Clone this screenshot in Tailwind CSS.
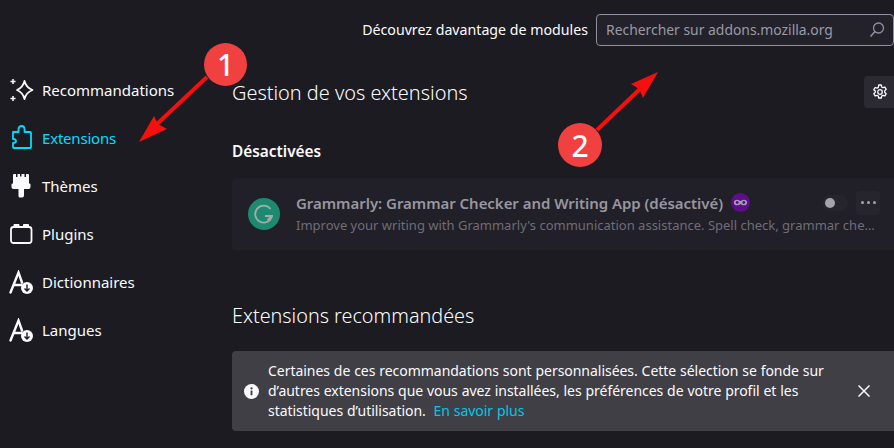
<!DOCTYPE html>
<html lang="fr">
<head>
    <meta charset="UTF-8">
    <title>Gestionnaire de modules</title>
    <script src="https://cdn.jsdelivr.net/npm/@tailwindcss/browser@4"></script>
</head>
<body class="relative w-[894px] h-[448px] overflow-hidden bg-[#1c1b22] text-[#fbfbfe] font-['Noto_Sans',sans-serif]">
    <div class="flex h-full">
        <!-- Menu de gauche -->
        <aside class="w-[232px] shrink-0 pt-[66px] pl-[10px] text-[15px]">
            <div class="flex items-center gap-2 h-12">
                <svg class="w-6 h-6" viewBox="0 0 24 24" fill="none" stroke="#fbfbfe" stroke-width="1.800" stroke-linejoin="round">
                    <path d="M14.500 3c1 4.500 3 7 8 9-5 2-7 4.500-8 9-1-4.500-3-7-7.500-9 4.500-2 6.500-4.500 7.500-9z"/>
                    <path d="M3 1v5M.5 3.500h5M3 18v5M.5 20.500h5" stroke-width="1.500"/>
                </svg>
                <span>Recommandations</span>
            </div>
            <div class="flex items-center gap-2 h-12 text-[#00ddff]">
                <svg class="w-6 h-6 overflow-visible" viewBox="0 0 24 24" fill="none" stroke="#00ddff" stroke-width="1.800" stroke-linejoin="round">
                    <path d="M3 6h5.500V3a3 3 0 0 1 6 0v3H20a1 1 0 0 1 1 1v14a1 1 0 0 1-1 1H4a1 1 0 0 1-1-1v-4c2 0 3-.8 3-2s-1-2-3-2z"/>
                </svg>
                <span class="tracking-[-0.2px]">Extensions</span>
            </div>
            <div class="flex items-center gap-2 h-12">
                <svg class="w-6 h-6" viewBox="0 0 24 24" fill="#fbfbfe">
                    <path d="M3 1a1 1 0 0 1 1-1h14a1 1 0 0 1 1 1v9H3z"/>
                    <path d="M2.500 9.500h17a1 1 0 0 1 1 1V13a2 2 0 0 1-2 2H14v6.500a2 2 0 0 1-2 2h-2a1.500 1.500 0 0 1-1.500-1.500v-7h-5a2 2 0 0 1-2-2v-2.500a1 1 0 0 1 1-1z"/>
                    <path d="M6 0h1.500v3H6zM10 0h1.500v2.500H10zM14.500 0H16v3h-1.500z" fill="#1c1b22"/>
                </svg>
                <span>Thèmes</span>
            </div>
            <div class="flex items-center gap-2 h-12">
                <svg class="w-6 h-6" viewBox="0 0 24 24" fill="none" stroke="#fbfbfe" stroke-width="1.800">
                    <rect x="1" y="5" width="20.500" height="16" rx="2.500"/>
                    <path d="M4 5V2.500h5V5M13.500 5V2.500h5V5" fill="#fbfbfe" stroke-width="1"/>
                </svg>
                <span>Plugins</span>
            </div>
            <div class="flex items-center gap-2 h-12">
                <svg class="w-[25px] h-6 -ml-px" viewBox="0 0 25 24" fill="none" stroke="#fbfbfe" stroke-width="2.400" stroke-linecap="round">
                    <path d="M1.500 22.500 9.500 2.500l3.500 10M5 15h7"/>
                    <circle cx="18" cy="18" r="6" fill="#fbfbfe" stroke="none"/>
                    <path d="M18 14.500v6M15.500 18.500l2.500 2.500 2.500-2.500" stroke="#1c1b22" stroke-width="1.400" stroke-linecap="butt"/>
                </svg>
                <span>Dictionnaires</span>
            </div>
            <div class="flex items-center gap-2 h-12">
                <svg class="w-[25px] h-6 -ml-px" viewBox="0 0 25 24" fill="none" stroke="#fbfbfe" stroke-width="2.400" stroke-linecap="round">
                    <path d="M1.500 22.500 9.500 2.500l3.500 10M5 15h7"/>
                    <circle cx="18" cy="18" r="6" fill="#fbfbfe" stroke="none"/>
                    <path d="M18 14.500v6M15.500 18.500l2.500 2.500 2.500-2.500" stroke="#1c1b22" stroke-width="1.400" stroke-linecap="butt"/>
                </svg>
                <span>Langues</span>
            </div>
        </aside>

        <!-- Contenu -->
        <main class="w-[662px] pt-[14px]">
            <div class="flex items-center justify-end gap-2 h-8">
                <span class="text-[14.2px]">Découvrez davantage de modules</span>
                <div class="flex items-center justify-between w-[298px] h-8 pl-[9px] pr-2 bg-[#23222b] border border-[#8f8f9d] rounded-[4px]">
                    <span class="text-[13.9px] text-[#9a9aa6]">Rechercher sur addons.mozilla.org</span>
                    <svg class="w-4 h-4" viewBox="0 0 16 16" fill="none" stroke="#8f8f9d" stroke-width="1.300">
                        <circle cx="9.500" cy="6" r="5"/>
                        <path d="M6 9.500 1.500 14.500" stroke-width="1.600"/>
                    </svg>
                </div>
            </div>

            <div class="flex items-center justify-between h-8 mt-[30px]">
                <h1 class="pt-[2px] text-[19.900px] font-light">Gestion de vos extensions</h1>
                <button class="flex items-center justify-center w-[30px] h-8 bg-[#2b2a33] rounded-l-[4px]">
                    <svg class="w-4 h-4 ml-px" viewBox="0 0 16 16" fill="none" stroke="#fbfbfe" stroke-width="1.300" stroke-linejoin="round">
                        <path d="M6.700 1h2.600l.4 2 1.200.7 2-.6 1.300 2.200-1.500 1.400v1.600l1.500 1.400-1.300 2.200-2-.6-1.200.7-.4 2H6.700l-.4-2-1.200-.7-2 .6-1.300-2.200 1.500-1.400V7.100L1.800 5.700l1.300-2.200 2 .6 1.200-.7z"/>
                        <circle cx="8" cy="8" r="2.300"/>
                    </svg>
                </button>
            </div>

            <h2 class="mt-[33px] h-[22px] text-[15.400px] leading-[22px] font-semibold">Désactivées</h2>

            <div class="flex items-center w-[680px] h-[72px] mt-[15px] pl-4 bg-[#211f28] rounded-[4px]">
                <svg class="w-8 h-8 shrink-0" viewBox="0 0 32 32">
                    <circle cx="16" cy="16" r="16" fill="#1c8a70"/>
                    <path d="M22.500 11a8.500 8.500 0 1 0 1.500 7h-7" fill="none" stroke="#a6aaa9" stroke-width="1.800"/>
                    <path d="M19.500 22l4.500-4" fill="none" stroke="#a6aaa9" stroke-width="1.800"/>
                </svg>
                <div class="w-[582px] ml-4">
                    <div class="flex items-center h-[22px] -mt-px">
                        <span class="text-[15px] tracking-[-0.04px] font-semibold text-[#97979f]">Grammarly: Grammar Checker and Writing App (désactivé)</span>
                        <svg class="w-[19px] h-[19px] ml-2" viewBox="0 0 20 20">
                            <circle cx="10" cy="10" r="10" fill="#5c0e8b"/>
                            <path d="M3 10c0-2 1.500-3 3.500-3 1.500 0 2.500 1 3.500 1.500 1-.5 2-1.500 3.500-1.500 2 0 3.500 1 3.500 3s-1.500 3-3.500 3c-1.500 0-2.500-1-3.500-1.500-1 .5-2 1.500-3.500 1.500-2 0-3.500-1-3.500-3z" fill="#a69cb0"/>
                            <circle cx="6.500" cy="10" r="1.500" fill="#5c0e8b"/>
                            <circle cx="13.500" cy="10" r="1.500" fill="#5c0e8b"/>
                        </svg>
                        <span class="flex items-center w-[26px] h-[16px] ml-auto mr-2 pl-[3px] bg-[#26252d] rounded-full">
                            <span class="w-[10px] h-[10px] bg-[#a3a3a9] rounded-full"></span>
                        </span>
                        <span class="flex items-center justify-center gap-[3px] w-6 h-6 mr-[-2px] bg-[#26252d] rounded-[4px]">
                            <i class="w-[3px] h-[3px] bg-[#a3a3a9] rounded-full"></i>
                            <i class="w-[3px] h-[3px] bg-[#a3a3a9] rounded-full"></i>
                            <i class="w-[3px] h-[3px] bg-[#a3a3a9] rounded-full"></i>
                        </span>
                    </div>
                    <p class="mt-[2px] text-[13px] text-[#6f6e76] truncate">Improve your writing with Grammarly's communication assistance. Spell check, grammar check, and more.</p>
                </div>
            </div>

            <h2 class="mt-[49px] h-8 pt-px text-[19.800px] leading-8 font-light">Extensions recommandées</h2>

            <div class="flex items-center h-20 mt-[20px] pl-3 bg-[#403f46] rounded-l-[4px]">
                <svg class="w-[15px] h-[15px] shrink-0" viewBox="0 0 16 16">
                    <circle cx="8" cy="8" r="8" fill="#fbfbfe"/>
                    <rect x="7" y="7" width="2" height="5" fill="#403f46"/>
                    <circle cx="8" cy="4.700" r="1.200" fill="#403f46"/>
                </svg>
                <p class="ml-[9px] text-sm tracking-[-0.035px] [word-spacing:0.27px] leading-5">
                    Certaines de ces recommandations sont personnalisées. Cette sélection se fonde sur<br>
                    d’autres extensions que vous avez installées, les préférences de votre profil et les<br>
                    statistiques d’utilisation.&nbsp; <a class="text-[#00c8e6]">En savoir plus</a>
                </p>
                <svg class="w-3 h-3 ml-auto mr-6 shrink-0" viewBox="0 0 12 12" stroke="#fbfbfe" stroke-width="1.500">
                    <path d="M.5.500l11 11M11.500.500l-11 11"/>
                </svg>
            </div>
        </main>
    </div>

    <!-- Annotations par-dessus la capture -->
    <svg class="absolute inset-0 w-[894px] h-[448px]" viewBox="0 0 894 448">
        <path d="M207 77 156 125" stroke="#f50f0f" stroke-width="4"/>
        <path d="M139 142 154 116 158 124 167 129z" fill="#f50f0f"/>
        <path d="M597 130 641 88" stroke="#f50f0f" stroke-width="4"/>
        <path d="M658 72 631 84 639 89 643 98z" fill="#f50f0f"/>
    </svg>
    <div class="absolute left-[204px] top-[43px] flex items-center justify-center w-[43px] h-[43px] bg-[#f04040] rounded-full text-[30px] font-medium text-white">1</div>
    <div class="absolute left-[558px] top-[123px] flex items-center justify-center w-[44px] h-[44px] bg-[#f04040] rounded-full text-[30px] font-medium text-white">2</div>
</body>
</html>
